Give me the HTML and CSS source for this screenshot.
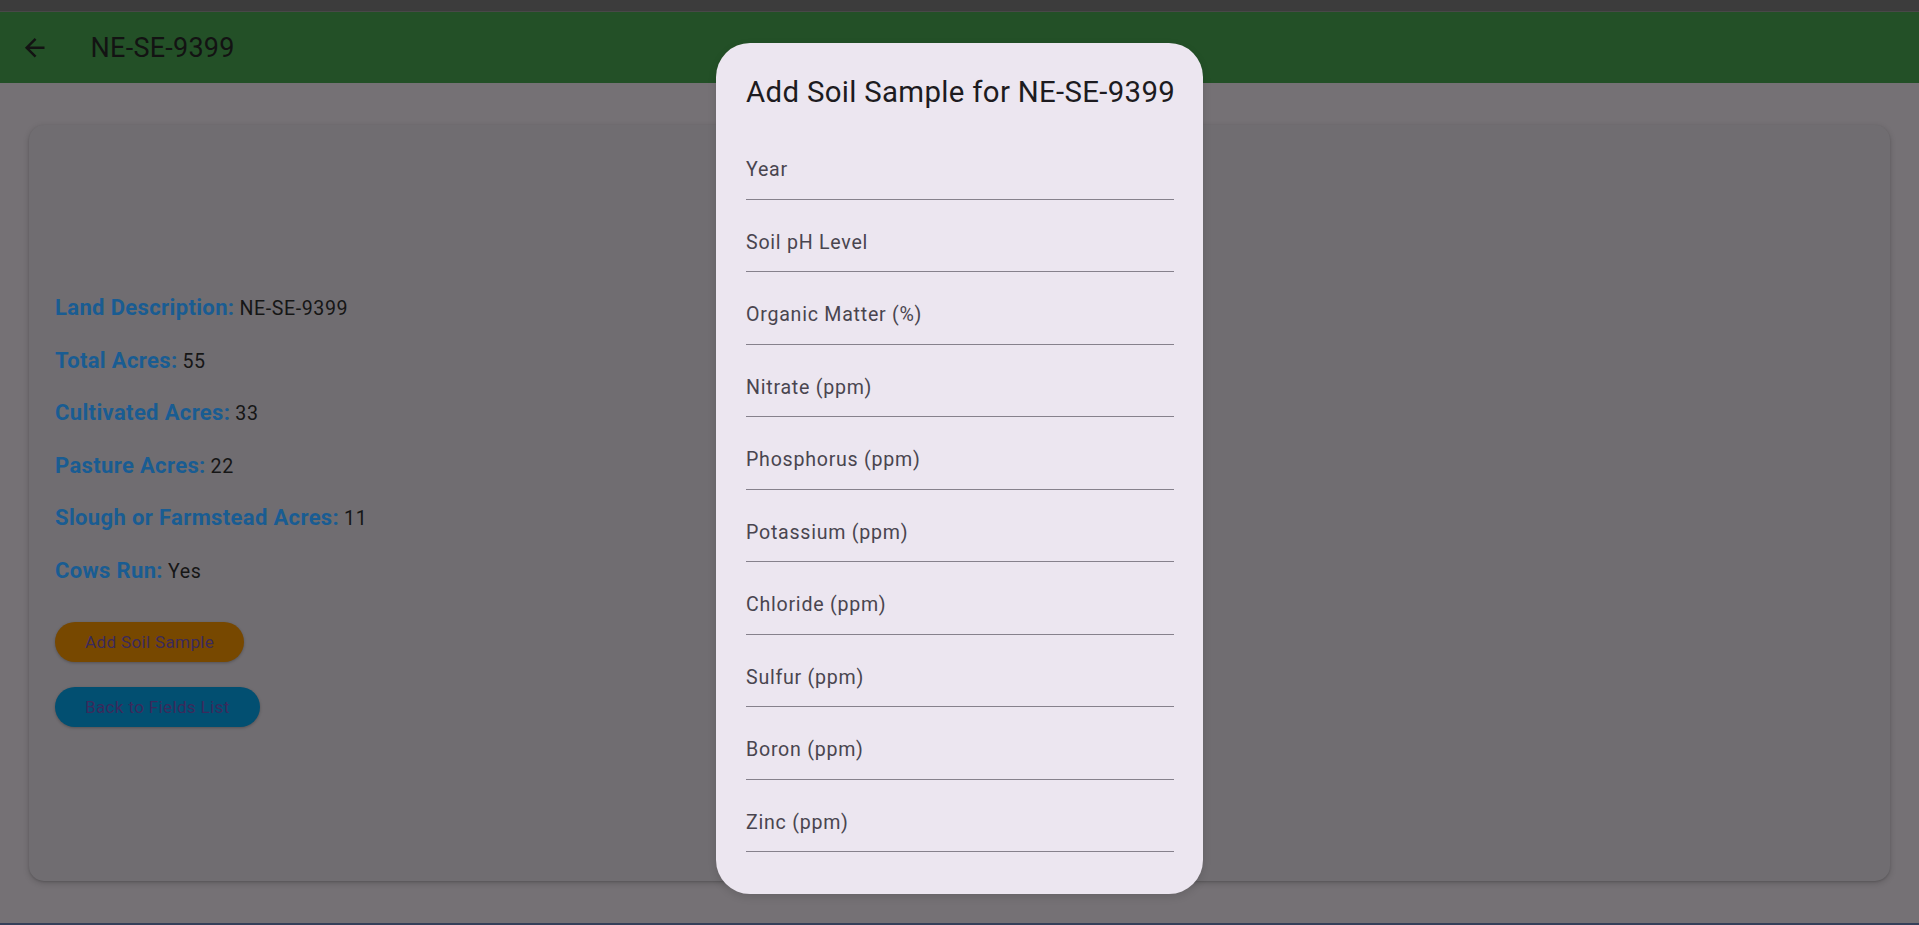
FILE: index.html
```html
<!DOCTYPE html>
<html>
<head>
<meta charset="utf-8">
<link rel="stylesheet" href="styles.css">
</head>
<body>
<div class="screen">
  <div class="statusbar"></div>
  <header class="appbar">
    <button class="back" aria-label="Back">
      <svg viewBox="0 0 24 24" width="29.4" height="29.4"><path d="M20 11H7.83l5.59-5.59L12 4l-8 8 8 8 1.41-1.41L7.83 13H20v-2z" fill="#131313"/></svg>
    </button>
    <h1 class="appbar-title">NE-SE-9399</h1>
  </header>
  <main class="content">
    <section class="card">
      <div class="rows">
        <p class="row"><span class="label">Land Description:</span> <span class="value">NE-SE-9399</span></p>
        <p class="row"><span class="label">Total Acres:</span> <span class="value">55</span></p>
        <p class="row"><span class="label">Cultivated Acres:</span> <span class="value">33</span></p>
        <p class="row"><span class="label">Pasture Acres:</span> <span class="value">22</span></p>
        <p class="row"><span class="label">Slough or Farmstead Acres:</span> <span class="value">11</span></p>
        <p class="row"><span class="label">Cows Run:</span> <span class="value">Yes</span></p>
      </div>
      <div class="actions">
        <button class="pill pill-orange">Add Soil Sample</button>
        <button class="pill pill-cyan">Back to Fields List</button>
      </div>
    </section>
  </main>
  <div class="bottomline"></div>

  <div class="dialog" role="dialog">
    <h2 class="dialog-title">Add Soil Sample for NE-SE-9399</h2>
    <div class="fields">
      <div class="field"><span class="field-label">Year</span></div>
      <div class="field"><span class="field-label">Soil pH Level</span></div>
      <div class="field"><span class="field-label">Organic Matter (%)</span></div>
      <div class="field"><span class="field-label">Nitrate (ppm)</span></div>
      <div class="field"><span class="field-label">Phosphorus (ppm)</span></div>
      <div class="field"><span class="field-label">Potassium (ppm)</span></div>
      <div class="field"><span class="field-label">Chloride (ppm)</span></div>
      <div class="field"><span class="field-label">Sulfur (ppm)</span></div>
      <div class="field"><span class="field-label">Boron (ppm)</span></div>
      <div class="field"><span class="field-label">Zinc (ppm)</span></div>
    </div>
  </div>
</div>
</body>
</html>
```

FILE: styles.css
```css
* { box-sizing: border-box; }
html, body {
  margin: 0;
  padding: 0;
  width: 1919px;
  height: 925px;
  overflow: hidden;
  font-family: Roboto, "Liberation Sans", sans-serif;
}
.screen {
  position: relative;
  width: 1919px;
  height: 925px;
  background: #757175;
  display: flex;
  flex-direction: column;
}
.statusbar {
  height: 12px;
  background: #3c3c3c;
  border-bottom: 1px solid #484848;
  flex: none;
}
.appbar {
  height: 71px;
  flex: none;
  background: #235027;
  display: flex;
  align-items: center;
}
.back {
  width: 68.6px;
  height: 68.6px;
  padding: 0;
  border: 0;
  background: transparent;
  display: flex;
  align-items: center;
  justify-content: center;
  flex: none;
}
.back svg { display: block; }
.appbar-title {
  margin: 0 0 0 22px;
  font-size: 27px;
  font-weight: 400;
  color: #131313;
  letter-spacing: 0.25px;
}
.content {
  flex: 1;
  padding: 42px 29px 0 29px;
}
.card {
  height: 756px;
  background: #706d71;
  border-radius: 15px;
  box-shadow: 0 2px 6px rgba(0,0,0,0.18), 0 1px 2px rgba(0,0,0,0.12);
  padding: 157px 26px 0 26px;
}
.rows { display: flex; flex-direction: column; }
.row {
  margin: 0;
  height: 52.5px;
  line-height: 52.5px;
  white-space: nowrap;
}
.label {
  font-size: 22px;
  font-weight: 700;
  color: #195c92;
  letter-spacing: 0.36px;
}
.value {
  margin-left: 1px;
  font-size: 19.6px;
  font-weight: 400;
  color: #161616;
  letter-spacing: 0.6px;
}
.actions {
  margin-top: 24.5px;
  display: flex;
  flex-direction: column;
  align-items: flex-start;
  gap: 25px;
}
.pill {
  height: 40px;
  border: 0;
  border-radius: 20px;
  padding: 0 30px;
  font-family: Roboto, "Liberation Sans", sans-serif;
  font-size: 17.15px;
  letter-spacing: 0.3px;
  color: #3b2a5c;
  box-shadow: 0 1px 3px rgba(0,0,0,0.25);
}
.pill-orange { background: #774800; }
.pill-cyan { background: #024f71; }
.bottomline {
  height: 2px;
  background: #35405a;
  flex: none;
}
.dialog {
  position: absolute;
  left: 716px;
  top: 43px;
  width: 487px;
  height: 851px;
  background: #ece6f0;
  border-radius: 34px;
  padding: 30px 29px 0 30px;
  box-shadow: 0 3px 8px rgba(0,0,0,0.12);
}
.dialog-title {
  margin: 0;
  font-size: 29.4px;
  line-height: 39.2px;
  font-weight: 400;
  color: #1d1b20;
  letter-spacing: 0.32px;
  white-space: nowrap;
}
.fields {
  margin-top: 14.8px;
  display: flex;
  flex-direction: column;
}
.field {
  height: 72.5px;
  padding-top: 31px;
  border-bottom: 1px solid #86818c;
}
.field-label {
  display: block;
  font-size: 19.6px;
  line-height: 24px;
  color: #49454f;
  letter-spacing: 0.75px;
}
```
